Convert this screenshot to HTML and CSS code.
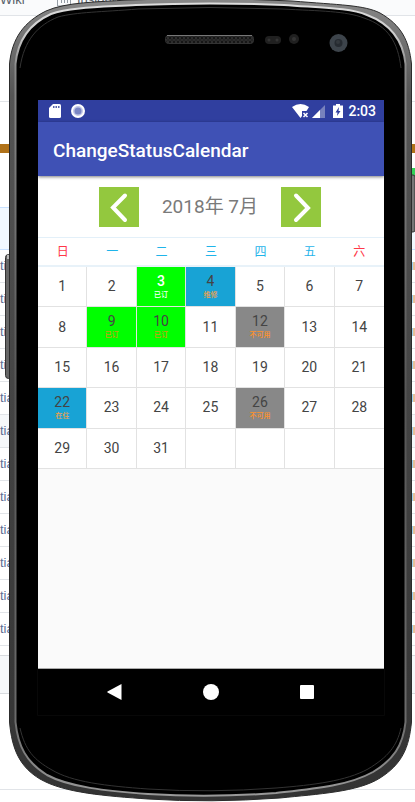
FILE: index.html
```html
<!DOCTYPE html>
<html lang="zh">
<head>
<meta charset="utf-8">
<meta name="viewport" content="width=device-width, initial-scale=1">
<title>ChangeStatusCalendar</title>
<link rel="stylesheet" href="styles.css">
</head>
<body>
<div class="stage">
  <div class="backdrop">
    <div class="tabs"><span>Wiki</span>
      <svg width="14" height="16" viewBox="0 0 14 16" fill="none" stroke="#959da5"><path d="M.5 1v14h13V1M4.500 4v8M7.500 1v11M10.500 5v7" /></svg>
      <span>Insights</span></div>
    <div class="summary"></div>
    <div class="langs"></div>
    <div class="gap"></div>
    <div class="commit"></div>
    <ul class="files">
      <li>tia</li><li>tia</li><li>tia</li><li>tia</li><li>tia</li><li class="hover">tia</li>
      <li>tia</li><li>tia</li><li>tia</li><li>tia</li><li>tia</li><li>tia</li>
    </ul>
    <div class="readme"></div>
    <div class="footer"></div>
  </div>

  <div class="phone">
    <svg class="shell" viewBox="0 0 415 802" preserveAspectRatio="none" aria-hidden="true">
      <defs>
        <linearGradient id="metal" x1="0" y1="0" x2="0" y2="1">
          <stop offset="0" stop-color="#888"/><stop offset=".04" stop-color="#777"/><stop offset=".12" stop-color="#555"/>
          <stop offset=".5" stop-color="#444"/><stop offset="1" stop-color="#333"/>
        </linearGradient>
        <linearGradient id="shine" x1="0" y1="0" x2="0" y2="1">
          <stop offset="0" stop-color="#ddd"/><stop offset=".04" stop-color="#ccc"/><stop offset=".08" stop-color="#888"/>
          <stop offset=".5" stop-color="#555"/><stop offset=".9" stop-color="#6a6a6a"/><stop offset="1" stop-color="#999"/>
        </linearGradient>
        <pattern id="mesh" width="4" height="4" patternUnits="userSpaceOnUse"><rect width="4" height="4" fill="#222"/><circle cx="2" cy="2" r="1.400" fill="#050505" stroke="#484848" stroke-width=".5"/></pattern>
      </defs>
      <rect x="5.500" y="254.500" width="8" height="124" rx="3" fill="#666" stroke="#333"/>
      <rect x="7" y="255" width="3" height="4" fill="#bbb"/>
      <rect x="408" y="175" width="7" height="57" rx="2" fill="#777" stroke="#333"/>
      <path fill="url(#metal)" stroke="#2c2c2c" d="M9.500 64C12 38 24 22 46 11C66 2 98 2 128 0Q210-3 292 1C340 5 364 5 380 13C401 25 409 40 411.500 64V722C409 748 402 764 380 778C358 792 318 794 280 798Q210 803 148 799C106 796 64 793 40 779C20 767 12 750 9.500 722Z"/>
      <path fill="#000" stroke="url(#shine)" stroke-width="2" d="M15.500 64C18 38 31 23 51 14C70 7 104 7 136 5Q210 2 284 5C325 8 350 8 367 15C391 24 403 40 405.500 64V722C403 746 393 760 373 772C348 786 312 789 276 793Q210 798 148 794C106 791 69 787 47 775C26 762 18 746 15.500 722Z"/>
      <path fill="none" stroke="#333" d="M20 68C24 40 38 25 58 17C76 12 102 12 138 9Q210 6 282 9C320 11 346 11 364 18C388 26 398 42 401 68M20 728C25 750 34 760 52 770C72 782 106 786 148 789Q210 793 276 788C314 785 346 781 368 769C388 757 397 746 401 728"/>
      <rect x="165.500" y="35.500" width="88" height="8" rx="3" fill="url(#mesh)" stroke="#333"/>
      <path d="M167 35.500H252" stroke="#777"/>
      <rect x="265" y="36" width="16" height="8" rx="4" fill="#202020"/>
      <circle cx="269" cy="40" r="1.500" fill="#333"/><circle cx="277" cy="40" r="1.500" fill="#333"/>
      <circle cx="294" cy="39" r="5" fill="#202020"/><circle cx="294" cy="39" r="2" fill="#333"/>
      <circle cx="338.500" cy="43" r="9" fill="#3d444b"/><circle cx="338.500" cy="43" r="4" fill="#262b31"/><circle cx="338" cy="42" r="2" fill="#34393e"/>
      <path d="M37.500 669V715.500H384.500V669" fill="none" stroke="#080808"/>
    </svg>

    <main class="screen">
      <div class="statusbar">
        <svg width="12" height="14" viewBox="0 0 12 14"><path d="M4 0h6.500Q12 0 12 1.500v11q0 1.500-1.500 1.500h-9Q0 14 0 12.500V4Z" fill="#fff"/><path d="M4 2h1.500v2H4zM6.500 2H8v2H6.500zM9 2h1.500v2H9z" fill="#5966ae"/></svg>
        <svg class="ring" width="14" height="14" viewBox="0 0 14 14"><circle cx="7" cy="7" r="6" fill="#c4c9e7" stroke="#fff" stroke-width="2"/><circle cx="7" cy="7" r="3.500" fill="#7b86c4"/></svg>
        <svg class="wifi" width="17" height="14" viewBox="0 0 17 14"><path d="M0 3Q8.500-3 17 3L14.500 7H10v5l-1.500 2Z" fill="#fff"/><path d="M11.500 9l4 4m0-4l-4 4" stroke="#fff" stroke-width="1.500"/></svg>
        <svg width="13" height="13" viewBox="0 0 13 13"><path d="M13 0V13H0Z" fill="#7882bd"/><path d="M8 5V13H0Z" fill="#fff"/></svg>
        <svg class="battery" width="10" height="14" viewBox="0 0 10 14"><path d="M3 0h4v1.500h3V14H0V1.500h3Z" fill="#fff"/><path d="M6 3L2.500 8.500H4.500L4 12L7.500 7H5.500Z" fill="#303f9f"/></svg>
        <time>2:03</time>
      </div>
      <header class="appbar"><h1>ChangeStatusCalendar</h1></header>
      <div class="month">
        <button type="button" class="step" aria-label="上个月"><svg width="40" height="40" viewBox="0 0 40 40"><path d="M26 8.500L14 20.500L26 33"/></svg></button>
        <h2>2018年 7月</h2>
        <button type="button" class="step" aria-label="下个月"><svg width="40" height="40" viewBox="0 0 40 40"><path d="M15 8.500L27 21L15 33"/></svg></button>
      </div>
      <table class="calendar">
        <thead><tr><th class="rest">日</th><th>一</th><th>二</th><th>三</th><th>四</th><th>五</th><th class="rest">六</th></tr></thead>
        <tbody>
          <tr><td>1</td><td>2</td><td class="booked today">3<small>已订</small></td><td class="blue">4<small>维修</small></td><td>5</td><td>6</td><td>7</td></tr>
          <tr><td>8</td><td class="booked">9<small>已订</small></td><td class="booked">10<small>已订</small></td><td>11</td><td class="closed">12<small>不可用</small></td><td>13</td><td>14</td></tr>
          <tr><td>15</td><td>16</td><td>17</td><td>18</td><td>19</td><td>20</td><td>21</td></tr>
          <tr><td class="blue">22<small>在住</small></td><td>23</td><td>24</td><td>25</td><td class="closed">26<small>不可用</small></td><td>27</td><td>28</td></tr>
          <tr><td>29</td><td>30</td><td>31</td><td></td><td></td><td></td><td></td></tr>
        </tbody>
      </table>
      <div class="blank"></div>
      <nav class="keys">
        <button type="button" aria-label="返回"><svg width="16" height="16" viewBox="0 0 16 16"><path d="M14.500 0V16L.5 8.500Q0 8 .5 7.500Z"/></svg></button>
        <button type="button" aria-label="主屏幕"><svg width="16" height="16" viewBox="0 0 16 16"><circle cx="8" cy="8" r="8"/></svg></button>
        <button type="button" aria-label="最近任务"><svg width="16" height="16" viewBox="0 0 16 16"><rect x="1" y="1" width="14" height="14" rx="1"/></svg></button>
      </nav>
    </main>
  </div>
</div>
</body>
</html>
```
FILE: styles.css
```css
* { box-sizing: border-box; }

body {
  margin: 0;
  background: #fff;
  font-family: Roboto, "Noto Sans CJK SC", sans-serif;
}

h1, h2, ul { margin: 0; padding: 0; }

button {
  padding: 0;
  border: 0;
  background: none;
}

svg { display: block; }

/* The page behind the phone and the phone share one grid cell. */
.stage {
  display: grid;
  min-height: 100vh;
  overflow: hidden;
}

.backdrop, .phone { grid-area: 1 / 1; }

.backdrop {
  display: flex;
  flex-direction: column;
  font: 13px/20px "Liberation Sans", sans-serif;
  color: #5f6f95;
}

.tabs {
  display: flex;
  align-items: flex-end;
  gap: 6px;
  height: 16px;
  padding-bottom: 8px;
  border-bottom: 1px solid #e1e4e8;
  background: #fafbfc;
  color: #586069;
  line-height: 14px;
}

.tabs span:first-child { width: 51px; }

.summary {
  height: 86px;
  border-bottom: 1px solid #e1e4e8;
}

.langs {
  height: 51px;
  border-bottom: 9px solid #b07219;
}

.gap {
  height: 54px;
  padding-top: 15px;
}

.gap::after {
  content: "";
  display: block;
  width: 30px;
  height: 24px;
  margin-left: auto;
  background: #34d058;
}

.commit {
  height: 43px;
  border: solid #c8e1ff;
  border-width: 1px 0;
  background: #f1f8ff;
}

.files { list-style: none; }

.files li {
  display: flex;
  align-items: center;
  justify-content: space-between;
  height: 33px;
  border-bottom: 1px solid #e1e4e8;
}

.files li::after {
  content: "";
  width: 2px;
  height: 8px;
  border-left: 1px solid #9fd3f2;
  background: #e8c09a;
}

.files .hover { background: #f6f8fa; }

.readme {
  height: 39px;
  margin-top: 9px;
  border: solid #d8dbdf;
  border-width: 1px 0;
  background: #f6f8fa;
}

.footer {
  height: 96px;
  border-bottom: 1px solid #e1e4e8;
}

.phone {
  position: relative;
  display: flex;
  flex-direction: column;
  padding: 100px 31px 87px 38px;
}

.shell {
  position: absolute;
  inset: 0;
  width: 100%;
  height: 100%;
}

.screen {
  position: relative;
  display: flex;
  flex: 1;
  flex-direction: column;
  background: #fafafa;
}

.statusbar {
  display: flex;
  align-items: center;
  gap: 3px;
  height: 22px;
  padding: 0 8px 0 11px;
  background: #303f9f;
  color: #fff;
}

.statusbar .ring { margin-left: 7px; }
.statusbar .wifi { margin-left: auto; }
.statusbar .battery { margin: 0 2px 0 5px; }
.statusbar time { font-size: 14px; font-weight: 500; }

.appbar {
  position: relative;
  height: 54px;
  padding: 0 15px;
  background: #3f51b5;
  box-shadow: 0 1px 3px rgba(0, 0, 0, .5);
}

.appbar h1 {
  color: #fff;
  font-size: 19px;
  font-weight: 500;
  line-height: 58px;
}

.month {
  display: flex;
  align-items: center;
  justify-content: center;
  gap: 23px;
  height: 62px;
  padding-right: 2px;
  background: #fff;
  border-bottom: 1px solid #e3f0f9;
}

.month h2 {
  color: #7a7a7a;
  font-size: 19px;
  font-weight: 400;
  line-height: 28px;
}

.step {
  background: #93c83e;
}

.step path {
  fill: none;
  stroke: #fff;
  stroke-width: 4;
  stroke-linecap: round;
}

.calendar {
  width: 100%;
  height: 231px;
  table-layout: fixed;
  border-collapse: separate;
  border-spacing: 0;
  background: #fff;
  color: #444;
}

.calendar th {
  height: 29px;
  padding: 0;
  border-bottom: 2px solid #e8f2f9;
  color: #1fb4ea;
  font-size: 12px;
  font-weight: 400;
  line-height: 20px;
}

.calendar th.rest { color: #ff3848; }

.calendar td {
  height: 40px;
  padding: 0;
  border: solid #e2e2e2;
  border-width: 0 1px 1px 0;
  font-size: 14px;
  line-height: 17px;
  text-align: center;
}

.calendar td:last-child { border-right: 0; }

.calendar small {
  display: block;
  color: #f3a04a;
  font-size: 7px;
  font-weight: 500;
  line-height: 11px;
}

.calendar .booked { background: #0f0; }
.calendar .booked small { color: #d09a10; }
.calendar .today, .calendar .booked.today small { color: #fff; }
.calendar .today { font-weight: 500; }
.calendar .blue { background: #18a3d5; }
.calendar .closed { background: #888; }
.calendar .closed small { color: #ff9228; }

.blank { flex: 1; }

.keys {
  display: flex;
  align-items: center;
  justify-content: center;
  gap: 80px;
  height: 47px;
  border-top: 1px solid #aaa;
  background: #000;
  fill: #fff;
}
```
